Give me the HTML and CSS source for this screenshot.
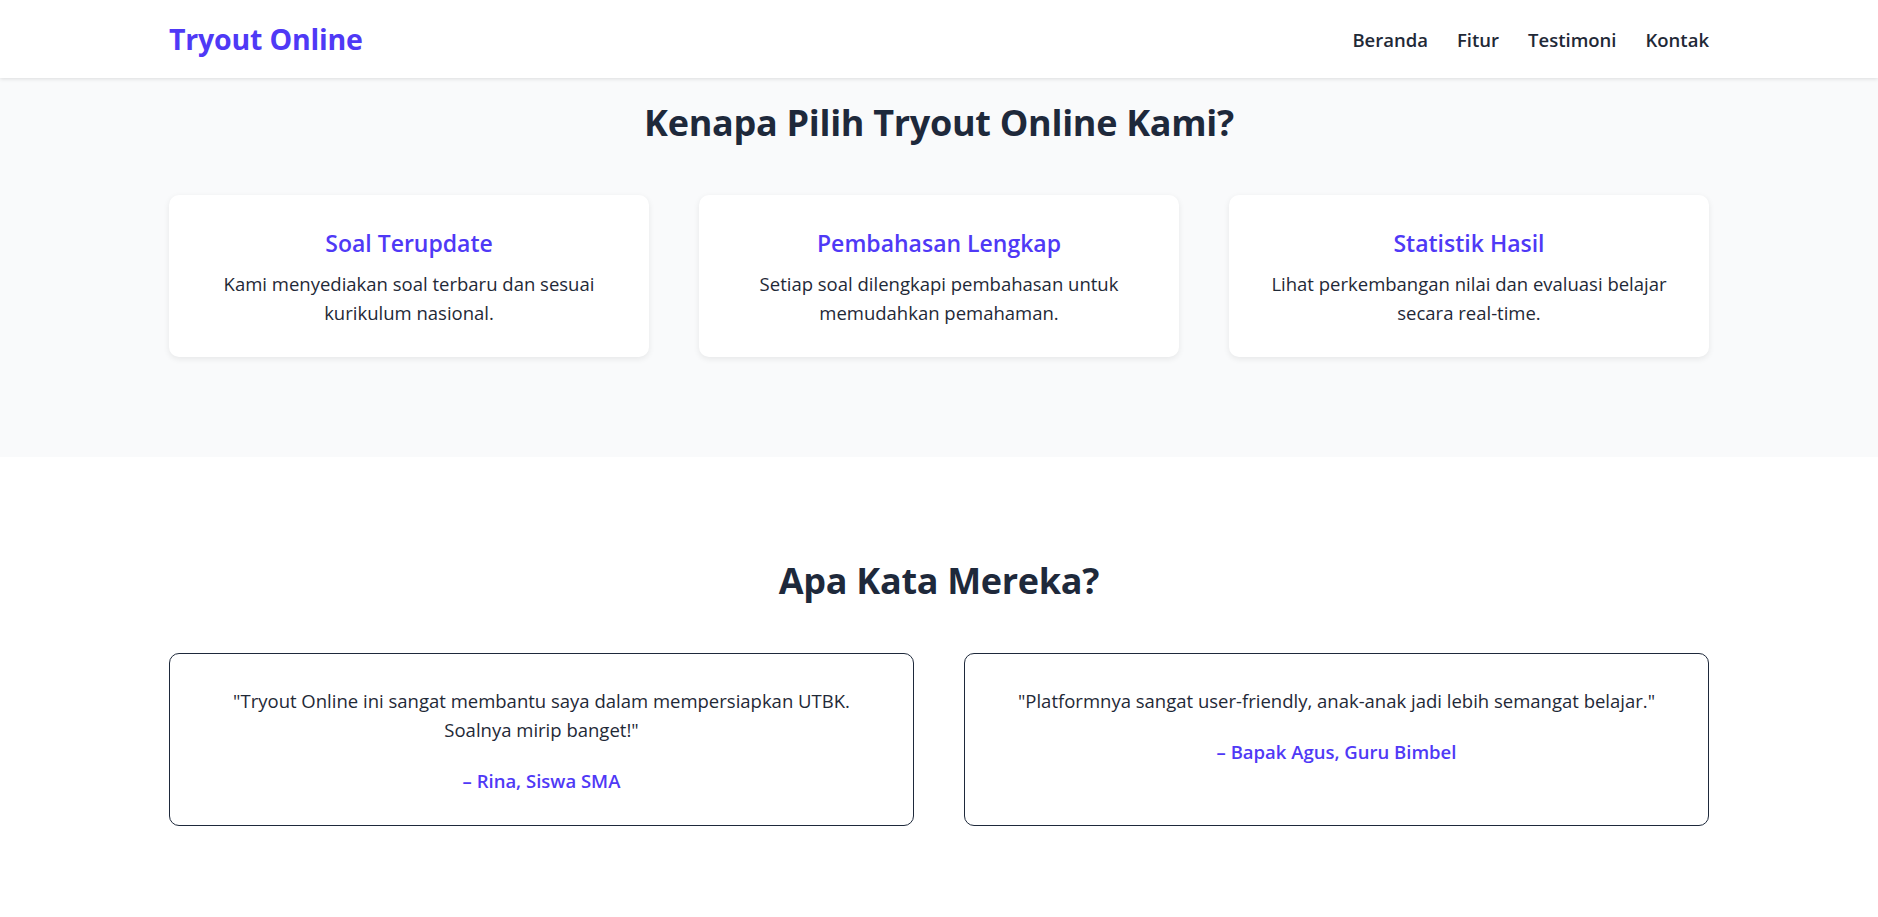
FILE: index.html
```html
<!DOCTYPE html>
<html lang="id">
<head>
<meta charset="utf-8">
<title>Tryout Online</title>
<link rel="stylesheet" href="styles.css">
</head>
<body>
<header class="site-header">
  <div class="container header-inner">
    <div class="logo">Tryout Online</div>
    <nav class="nav">
      <a href="#">Beranda</a>
      <a href="#">Fitur</a>
      <a href="#">Testimoni</a>
      <a href="#">Kontak</a>
    </nav>
  </div>
</header>

<section class="features">
  <div class="container">
    <h2 class="section-title">Kenapa Pilih Tryout Online Kami?</h2>
    <div class="feature-grid">
      <div class="feature-card">
        <h3>Soal Terupdate</h3>
        <p>Kami menyediakan soal terbaru dan sesuai kurikulum nasional.</p>
      </div>
      <div class="feature-card">
        <h3>Pembahasan Lengkap</h3>
        <p>Setiap soal dilengkapi pembahasan untuk memudahkan pemahaman.</p>
      </div>
      <div class="feature-card">
        <h3>Statistik Hasil</h3>
        <p>Lihat perkembangan nilai dan evaluasi belajar secara real-time.</p>
      </div>
    </div>
  </div>
</section>

<section class="testimonials">
  <div class="container">
    <h2 class="section-title">Apa Kata Mereka?</h2>
    <div class="testi-grid">
      <div class="testi-card">
        <p class="quote">"Tryout Online ini sangat membantu saya dalam mempersiapkan UTBK. Soalnya mirip banget!"</p>
        <p class="author">– Rina, Siswa SMA</p>
      </div>
      <div class="testi-card">
        <p class="quote">"Platformnya sangat user-friendly, anak-anak jadi lebih semangat belajar."</p>
        <p class="author">– Bapak Agus, Guru Bimbel</p>
      </div>
    </div>
  </div>
</section>
</body>
</html>
```

FILE: styles.css
```css
* {
  box-sizing: border-box;
}

html, body {
  margin: 0;
  padding: 0;
}

body {
  font-family: "Open Sans", "Noto Sans", sans-serif;
  color: #1f2937;
  background: #ffffff;
}

.container {
  width: 1540px;
  margin: 0 auto;
}

.site-header {
  background: #ffffff;
  height: 78px;
  box-shadow: 0 1px 4px rgba(0, 0, 0, 0.12);
  position: relative;
  z-index: 1;
}

.header-inner {
  height: 100%;
  display: flex;
  align-items: center;
  justify-content: space-between;
}

.logo {
  font-size: 28.5px;
  font-weight: 700;
  color: #4f39f6;
  letter-spacing: -0.2px;
}

.nav {
  display: flex;
  gap: 29px;
}

.nav a {
  font-size: 18.5px;
  font-weight: 600;
  color: #1f2937;
  text-decoration: none;
}

.features {
  background: #f9fafb;
  padding: 21px 0 100px;
}

.section-title {
  margin: 0 0 48px;
  text-align: center;
  font-size: 36px;
  line-height: 48px;
  font-weight: 700;
  color: #1e293b;
  letter-spacing: -0.3px;
}

.feature-grid {
  display: grid;
  grid-template-columns: repeat(3, 1fr);
  gap: 50px;
}

.feature-card {
  background: #ffffff;
  border-radius: 10px;
  box-shadow: 0 2px 6px rgba(0, 0, 0, 0.08);
  padding: 30px 32px;
  text-align: center;
}

.feature-card h3 {
  margin: 0 0 8px;
  font-size: 23px;
  line-height: 36px;
  font-weight: 600;
  color: #4f39f6;
}

.feature-card p {
  margin: 0;
  font-size: 18.5px;
  line-height: 29px;
}

.testimonials {
  background: #ffffff;
  padding: 100px 0 93px;
}

.testi-grid {
  display: grid;
  grid-template-columns: repeat(2, 1fr);
  gap: 50px;
}

.testi-card {
  border: 1px solid #1e293b;
  border-radius: 10px;
  padding: 32px 36px 30px;
  text-align: center;
}

.testi-card .quote {
  margin: 0 0 22px;
  font-size: 18.5px;
  line-height: 29px;
}

.testi-card .author {
  margin: 0;
  font-size: 18.5px;
  line-height: 29px;
  font-weight: 600;
  color: #4f39f6;
}
```
